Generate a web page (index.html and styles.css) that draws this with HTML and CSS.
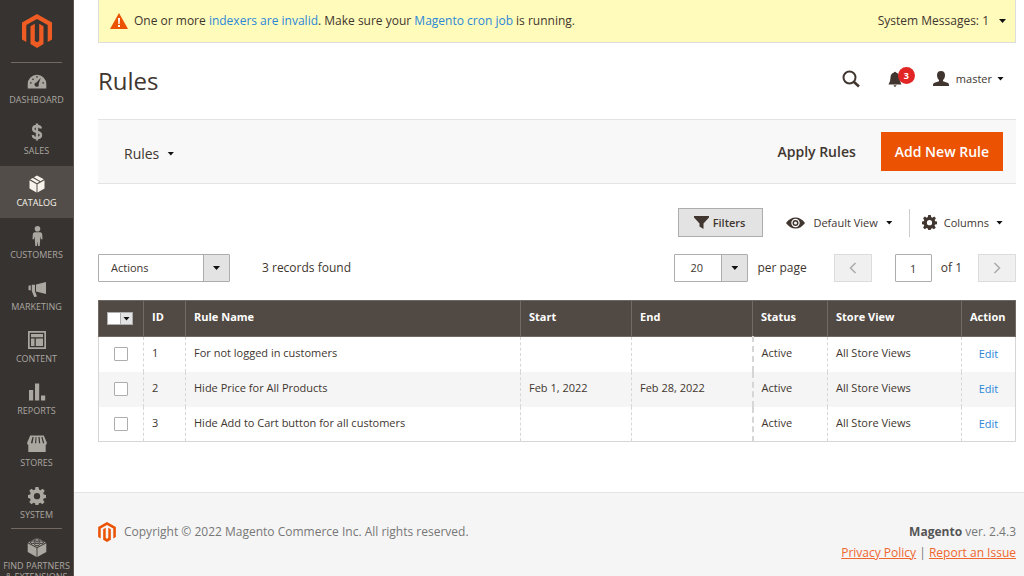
FILE: index.html
```
<!DOCTYPE html>
<html lang="en">
<head>
<meta charset="utf-8">
<title>Rules / Magento Admin</title>
<link rel="stylesheet" href="styles.css">
</head>
<body>
<svg class="defs" aria-hidden="true">
  <symbol id="logo" viewBox="0 0 30 34"><path d="M15 0 30 8.5V25.5L25.700 28V11L15 4.900 4.300 11V28L0 25.500V8.500Z"/><path d="M8.500 12.200 12.800 9.800V27L15 28.300 17.200 27V9.800L21.500 12.200V30L15 34 8.500 30Z"/></symbol>
  <symbol id="gear" viewBox="0 0 20 20"><path fill-rule="evenodd" d="M8.300 0h3.400l.5 2.800 1.700.7 2.300-1.600 2.400 2.400-1.700 2.300.7 1.700 2.400.5v3.400l-2.600.5-.7 1.700 1.700 2.300-2.400 2.400-2.300-1.600-1.700.7-.5 1.800H8.300l-.5-1.900-1.700-.7-2.300 1.700-2.400-2.400L3 14.400l-.7-1.700L0 12.200V8.800l2.400-.5.6-1.700L1.400 4.300l2.400-2.400 2.300 1.600 1.700-.7ZM10 6.700a3.500 3.500 0 1 0 0 7 3.500 3.500 0 0 0 0-7Z"/></symbol>
</svg>
<div class="app">
  <aside class="sidebar">
    <a class="brand" href="#" aria-label="Magento Admin"><svg width="30" height="34"><use href="#logo"/></svg></a>
    <nav class="menu">
      <a class="menu-item divided" href="#"><svg width="20" height="20" viewBox="0 0 20 20"><path fill-rule="evenodd" d="M.7 17.500V13a9.300 9.300 0 0 1 18.600 0v4.500ZM3 12.500h1.600v-1.300H3Zm2-4.300 1 1 1-1-1-1ZM9.400 5v1.700h1.200V5Zm6 6.200v1.300H17v-1.300ZM13.800 6.700 9.500 11.600a2.100 2.100 0 1 0 2.100 1.300Z"/></svg><span>Dashboard</span></a>
      <a class="menu-item" href="#"><svg width="20" height="20" viewBox="0 0 20 20"><path class="stroke" stroke-width="2.400" d="M14 6.500C13.500 4.500 12 4 10 4S6.200 5 6.200 7s1.600 2.600 3.800 3 4 1 4 3.100-1.700 3-4 3-4-.8-4.200-3M10 1.500V18.500"/></svg><span>Sales</span></a>
      <a class="menu-item active" href="#" aria-current="page"><svg width="20" height="20" viewBox="0 0 20 20"><path d="M2.500 6.300 9.500 10.200V18.500L2.500 14.500ZM10.500 10.200 17.500 6.300V14.500L10.500 18.500ZM3.200 5.300 5.800 3.900 12.400 7.800 10 9.200ZM6.900 3.300 10 1.500 16.800 5.300 13.500 7.200Z"/></svg><span>Catalog</span></a>
      <a class="menu-item" href="#"><svg width="20" height="20" viewBox="0 0 20 20"><circle cx="10.500" cy="2.800" r="2.800"/><path d="M7.500 6.200h6q1.500.3 1.700 2l.3 5H14l-.6-3-.7 10h-1.600l-.6-5-.6 5H8.300l-.7-10-.6 3H5.500l.3-5q.2-1.700 1.700-2Z"/></svg><span>Customers</span></a>
      <a class="menu-item" href="#"><svg width="20" height="20" viewBox="0 0 20 20"><path d="M19 4V16L9 13.500V6.500ZM8 6.800V13.300L10 18.500 7.200 19 4.800 13V6.800ZM3.800 7.200V12.500L1.500 12V7.800Z"/></svg><span>Marketing</span></a>
      <a class="menu-item" href="#"><svg width="20" height="20" viewBox="0 0 20 20"><path fill-rule="evenodd" d="M1 1H19V19H1ZM2.700 2.700V17.300H17.300V2.700Z"/><path d="M4 4H16V7.200H4ZM4 8.500H7.500V16H4ZM8.800 8.500H16V16H8.800Z"/></svg><span>Content</span></a>
      <a class="menu-item" href="#"><svg width="20" height="20" viewBox="0 0 20 20"><path d="M2 8H6.200V18.500H2ZM8 1.500H12.200V18.500H8ZM14 13.500H18.200V18.500H14Z"/></svg><span>Reports</span></a>
      <a class="menu-item" href="#"><svg width="20" height="20" viewBox="0 0 20 20"><path fill-rule="evenodd" d="M3.200 1.500H16.800L20 9q-.3 1.700-1.300 2V18H1.300V11Q.3 10.700 0 9ZM5.500 3 3.800 9.200H5.500L6.700 3ZM8.600 3 8 9.200H9.200L9.500 3ZM11.400 3 12 9.200H13.200L12.600 3ZM14.300 3 16 9.200H17.300L15.500 3Z"/></svg><span>Stores</span></a>
      <a class="menu-item" href="#"><svg width="18" height="20"><use href="#gear"/></svg><span>System</span></a>
      <a class="menu-item divided" href="#"><svg width="20" height="20" viewBox="0 0 20 20"><path d="M.7 6.200 9.600 11V20L.7 15ZM10.400 11 19.300 6.200V15L10.400 20ZM1.200 5.400 10 .8 18.800 5.400 10 10.200Z"/><g class="studs"><ellipse cx="10" cy="3" rx="2.400" ry="1.300"/><ellipse cx="5.700" cy="5.200" rx="2.400" ry="1.300"/><ellipse cx="14.300" cy="5.200" rx="2.400" ry="1.300"/><ellipse cx="10" cy="7.500" rx="2.400" ry="1.300"/></g></svg><span>Find Partners &amp; Extensions</span></a>
    </nav>
  </aside>

  <div class="page">
    <div class="content">
      <div class="notice">
        <svg width="18" height="16" viewBox="0 0 18 16"><path class="orange" d="M9 0 18 16H0Z"/><path class="white" d="M8 5H10L9.700 11H8.300ZM8 12H10V14H8Z"/></svg>
        <p>One or more <a href="#">indexers are invalid</a>. Make sure your <a href="#">Magento cron job</a> is running.</p>
        <button type="button" class="plain">System Messages: 1 <span class="caret"></span></button>
      </div>

      <header class="page-header">
        <h1>Rules</h1>
        <div class="header-tools">
          <button type="button" class="plain" aria-label="Search"><svg width="18" height="18" viewBox="0 0 18 18"><circle class="stroke" stroke-width="2" cx="7.500" cy="7.500" r="6"/><path class="stroke" stroke-width="2.600" d="m12 12 5 4.500"/></svg></button>
          <button type="button" class="plain bell" aria-label="3 notifications"><svg width="14" height="16" viewBox="0 0 14 16"><path d="M6 1.500Q6 .8 7 .8T8 1.500Q11.500 2.500 11.500 6.500 11.500 10.500 13.500 13.500H.5Q2.500 10.500 2.500 6.500 2.500 2.500 6 1.500ZM5.500 14.300h3Q8 15.800 7 15.800T5.500 14.300Z"/></svg><span class="badge">3</span></button>
          <button type="button" class="plain user"><svg width="16" height="15" viewBox="0 0 16 15"><path d="M8 0C10.600 0 12 1.500 12 4.200 12 6.500 11 8 10 9v1.200l4.500 1.500Q16 12.300 16 13.700V15H0V13.700q0-1.400 1.500-2L6 10.200V9C5 8 4 6.500 4 4.200 4 1.500 5.400 0 8 0Z"/></svg>master <span class="caret"></span></button>
        </div>
      </header>

      <div class="action-bar">
        <button type="button" class="plain view-switch">Rules <span class="caret"></span></button>
        <div class="action-buttons">
          <button type="button" class="plain apply">Apply Rules</button>
          <button type="button" class="primary">Add New Rule</button>
        </div>
      </div>

      <div class="grid-tools">
        <button type="button" class="filters"><svg width="15" height="13" viewBox="0 0 15 13"><path d="M0 0H15V1.500L9.500 7.500V13L5.500 10.500V7.500L0 1.500Z"/></svg>Filters</button>
        <button type="button" class="plain default-view"><svg width="19" height="12" viewBox="0 0 19 12"><path fill-rule="evenodd" d="M0 6Q4 .5 9.500 .5T19 6Q15 11.500 9.500 11.500T0 6ZM9.500 1.800a4.200 4.200 0 1 0 0 8.400 4.200 4.200 0 0 0 0-8.400Z"/><path fill-rule="evenodd" d="M9.500 3a3 3 0 1 0 0 6 3 3 0 0 0 0-6Zm0 1.500a1.500 1.500 0 1 1 0 3 1.500 1.500 0 0 1 0-3Z"/></svg><span>Default View</span><span class="caret"></span></button>
        <button type="button" class="plain columns"><svg width="15" height="15"><use href="#gear"/></svg><span>Columns</span><span class="caret"></span></button>
      </div>

      <div class="grid-controls">
        <div class="select actions"><select aria-label="Actions"><option>Actions</option></select><span class="arrow"><span class="caret"></span></span></div>
        <p class="records">3 records found</p>
        <div class="pager">
          <div class="select per-page"><select id="limit"><option>20</option></select><span class="arrow"><span class="caret"></span></span></div>
          <label for="limit">per page</label>
          <button type="button" class="step prev" disabled aria-label="Previous page"><svg width="8" height="12" viewBox="0 0 8 12"><path class="stroke" stroke-width="1.500" d="M6.500 1 1.500 6l5 5"/></svg></button>
          <input id="page" type="text" value="1">
          <label for="page">of 1</label>
          <button type="button" class="step next" disabled aria-label="Next page"><svg width="8" height="12" viewBox="0 0 8 12"><path class="stroke" stroke-width="1.500" d="m1.500 1 5 5-5 5"/></svg></button>
        </div>
      </div>

      <table class="grid">
        <colgroup><col class="c-check"><col class="c-id"><col><col class="c-start"><col class="c-end"><col class="c-status"><col class="c-store"><col class="c-action"></colgroup>
        <thead>
          <tr><th><div class="multicheck"><input type="checkbox" aria-label="Select all"><button type="button" aria-label="Selection options"><span class="caret"></span></button></div></th><th>ID</th><th>Rule Name</th><th>Start</th><th>End</th><th>Status</th><th>Store View</th><th>Action</th></tr>
        </thead>
        <tbody>
          <tr><td><input type="checkbox" aria-label="Select rule 1"></td><td>1</td><td>For not logged in customers</td><td></td><td></td><td>Active</td><td>All Store Views</td><td><a href="#">Edit</a></td></tr>
          <tr><td><input type="checkbox" aria-label="Select rule 2"></td><td>2</td><td>Hide Price for All Products</td><td>Feb 1, 2022</td><td>Feb 28, 2022</td><td>Active</td><td>All Store Views</td><td><a href="#">Edit</a></td></tr>
          <tr><td><input type="checkbox" aria-label="Select rule 3"></td><td>3</td><td>Hide Add to Cart button for all customers</td><td></td><td></td><td>Active</td><td>All Store Views</td><td><a href="#">Edit</a></td></tr>
        </tbody>
      </table>
    </div>

    <footer class="footer">
      <p class="copyright"><svg width="18" height="20"><use href="#logo"/></svg>Copyright © 2022 Magento Commerce Inc. All rights reserved.</p>
      <div class="legal">
        <p><strong>Magento</strong> ver. 2.4.3</p>
        <p><a href="#">Privacy Policy</a> | <a href="#">Report an Issue</a></p>
      </div>
    </footer>
  </div>
</div>
</body>
</html>
```
FILE: styles.css
```
* { box-sizing: border-box; }
body { margin: 0; font: 11px/16px "Open Sans", "Noto Sans", sans-serif; color: #41362f; background: #fff; }
p, h1 { margin: 0; }
a { color: #2b87d8; text-decoration: none; }
button, select, input { font: inherit; color: inherit; margin: 0; }
svg { display: block; flex: none; fill: currentColor; }
.stroke { fill: none; stroke: currentColor; }
.orange { fill: #eb5202; }
.white { fill: #fff; }
.defs { position: absolute; width: 0; height: 0; }
.plain { display: flex; align-items: center; padding: 0; border: 0; background: none; }
.caret { flex: none; width: 7px; height: 4px; background: #111; clip-path: polygon(0 0, 100% 0, 50% 100%); }

.app { display: flex; height: 100vh; }
.sidebar { flex: none; width: 74px; overflow: hidden; background: #373330; border-right: 1px solid #5a534d; }
.brand { display: flex; justify-content: center; padding: 14px 0; color: #ee5c24; }
.menu-item { position: relative; display: flex; flex-direction: column; align-items: center; min-height: 52px; padding-top: 8px; color: #aaa6a0; font-size: 9px; line-height: 11px; text-align: center; text-transform: uppercase; }
.menu-item span { margin-top: 3px; }
.menu-item.divided { padding-top: 9px; }
.menu-item.divided:last-child { margin-top: -2px; }
.menu-item.divided::before { content: ""; position: absolute; top: 0; left: 11px; right: 11px; height: 1px; background: #736963; }
.menu-item.active { background: #524d49; color: #f7f3eb; }
.studs { fill: #aaa6a0; stroke: #373330; }

.page { flex: 1; min-width: 0; display: flex; flex-direction: column; overflow: auto; }
.content { padding: 0 8px 50px 24px; }
.notice { display: flex; align-items: center; gap: 6px; min-height: 43px; padding: 0 9px 0 11px; background: #fffbbb; border: 1px solid #ddd; border-top: 0; font-size: 12px; }
.notice p { flex: 1; }
.notice .caret { margin-left: 10px; }

.page-header { display: flex; align-items: center; justify-content: space-between; height: 76px; padding-right: 12px; }
h1 { font-size: 24px; line-height: 32px; font-weight: 400; }
.header-tools { display: flex; align-items: center; padding-bottom: 5px; }
.bell { position: relative; margin-left: 28px; }
.badge { position: absolute; left: 10px; top: -4px; width: 17px; height: 17px; border-radius: 50%; background: #e22626; color: #fff; font-size: 9px; line-height: 17px; font-weight: 700; text-align: center; }
.user { margin-left: 31px; gap: 7px; }
.user .caret { margin-left: -2px; }

.action-bar { display: flex; align-items: center; justify-content: space-between; padding: 12px 13px 12px 26px; background: #f8f8f8; border-top: 1px solid #e3e3e3; border-bottom: 1px solid #e3e3e3; }
.view-switch { gap: 8px; padding-top: 4px; font-size: 14px; }
.action-buttons { display: flex; gap: 25px; font-size: 14px; font-weight: 600; }
.primary { height: 39px; padding: 0 13px; border: 1px solid #eb5202; background: #eb5202; color: #fff; }

.grid-tools { display: flex; justify-content: flex-end; align-items: center; padding: 24px 13px 0 0; }
.filters { display: flex; align-items: center; gap: 4px; height: 29px; padding: 0 17px 0 15px; border: 1px solid #adadad; background: #e3e3e3; font-weight: 600; }
.default-view { gap: 8px; margin-left: 23px; }
.columns { gap: 7px; height: 28px; margin-left: 16px; padding-left: 12px; border-left: 1px solid #ccc; }

.grid-controls { display: flex; align-items: center; padding: 17px 0 18px; font-size: 12px; }
.select { position: relative; height: 28px; border: 1px solid #adadad; border-radius: 1px; background: #fff; font-size: 11px; }
.select select { width: 100%; height: 100%; padding: 0 12px; border: 0; appearance: none; background: transparent; }
.actions { width: 132px; }
.per-page { width: 74px; }
.per-page select { padding: 0 15px; }
.arrow { position: absolute; top: 0; right: 0; bottom: 0; width: 26px; display: flex; align-items: center; justify-content: center; background: #e3e3e3; border-left: 1px solid #adadad; pointer-events: none; }
.records { margin-left: 32px; }
.pager { display: flex; align-items: center; margin-left: auto; }
.pager label { margin-left: 9px; }
.pager input { width: 37px; height: 28px; margin-left: 23px; padding: 0; border: 1px solid #adadad; border-radius: 1px; text-align: center; font-size: 11px; }
.step { display: flex; align-items: center; justify-content: center; width: 38px; height: 28px; padding: 0; border: 1px solid #dcdcdc; background: #f0f0f0; color: #aaa; }
.prev { margin-left: 27px; }
.next { margin-left: 16px; }

.grid { width: 100%; table-layout: fixed; border-collapse: collapse; border: 1px solid #d6d6d6; }
.c-check { width: 45px; }
.c-id { width: 42px; }
.c-start { width: 111px; }
.c-end { width: 121px; }
.c-status { width: 75px; }
.c-store { width: 134px; }
.c-action { width: 54px; }
th, td { height: 35px; padding: 0 8px; text-align: left; border-left: 1px dashed #d6d6d6; }
th { height: 36px; padding-bottom: 3px; background: #514943; color: #fff; font-weight: 700; border: 1px solid #736963; white-space: nowrap; }
td { padding-bottom: 2px; }
td:nth-child(6) { border-left-width: 2px; }
th:first-child { padding: 0 8px; }
td:first-child { padding: 0; border-left: 1px solid #d6d6d6; }
td:last-child { padding: 0; text-align: center; }
tbody tr:nth-child(even) { background: #f5f5f5; }
input[type="checkbox"] { display: block; appearance: none; width: 14px; height: 14px; border: 1px solid #adadad; border-radius: 1px; background: #fff; }
td input[type="checkbox"] { margin: 0 auto; }
.multicheck { display: flex; width: 26px; height: 13px; border: 1px solid #adadad; background: #fff; }
.multicheck input[type="checkbox"] { width: 12px; height: 11px; border: 0; }
.multicheck button { flex: 1; display: flex; align-items: center; justify-content: center; padding: 0; border: 0; border-left: 1px solid #adadad; background: #e3e3e3; }

.footer { flex: 1 0 auto; display: flex; justify-content: space-between; align-items: flex-start; padding: 28px 8px 16px 24px; background: #f5f5f5; border-top: 1px solid #e3e3e3; color: #777; font-size: 12px; line-height: 21px; }
.copyright { display: flex; align-items: center; gap: 8px; }
.copyright svg { color: #eb5202; }
.legal { text-align: right; }
.legal strong { color: #555; }
.legal a { color: #ef672f; text-decoration: underline; }
```
